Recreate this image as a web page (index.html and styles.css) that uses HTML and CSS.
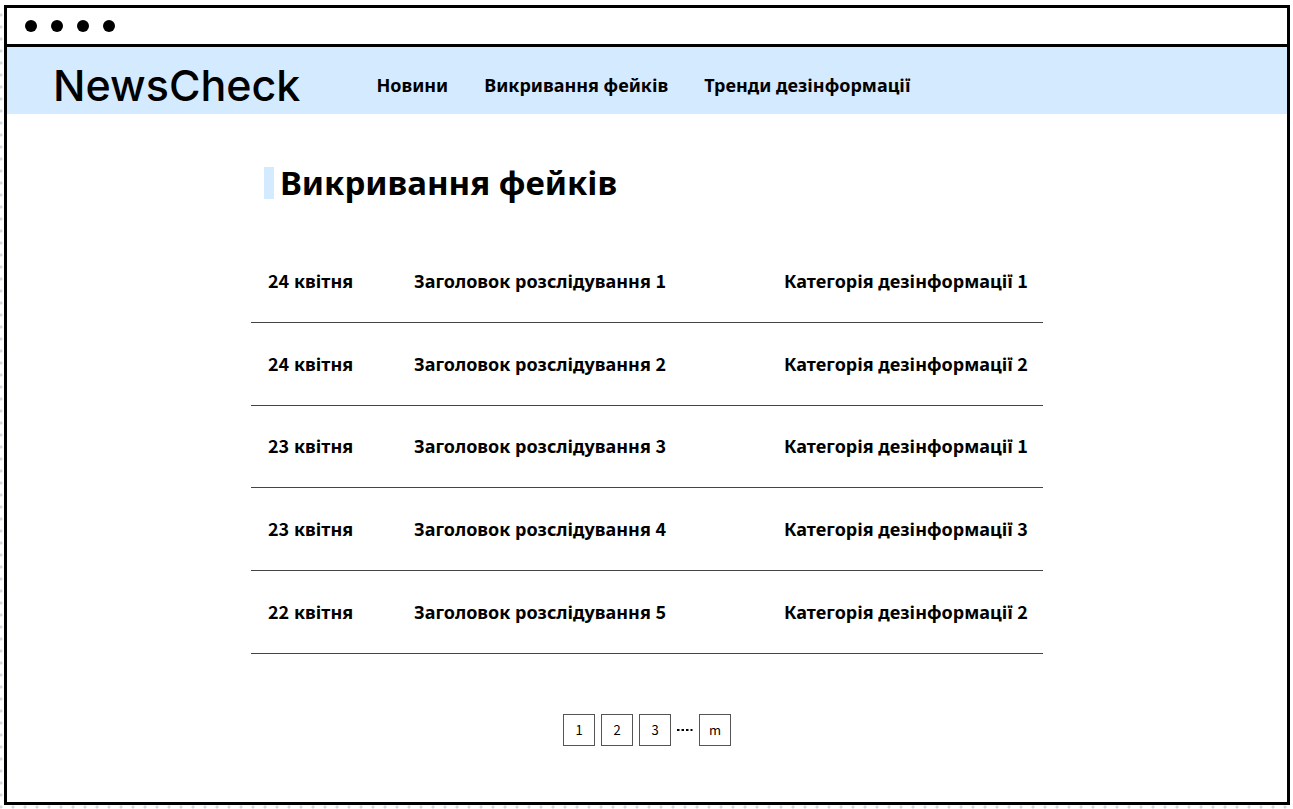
FILE: index.html
```html
<!DOCTYPE html>
<html lang="uk">
<head>
<meta charset="utf-8">
<meta name="viewport" content="width=device-width, initial-scale=1">
<title>NewsCheck</title>
<link rel="stylesheet" href="styles.css">
</head>
<body class="canvas">
<div class="window">
  <div class="titlebar" aria-hidden="true">
    <span class="dot"></span><span class="dot"></span><span class="dot"></span><span class="dot"></span>
  </div>
  <header class="header">
    <a class="logo" href="#">NewsCheck</a>
    <nav class="nav">
      <a href="#">Новини</a>
      <a href="#">Викривання фейків</a>
      <a href="#">Тренди дезінформації</a>
    </nav>
  </header>
  <main class="main">
    <h1 class="title">Викривання фейків</h1>
    <table class="list">
      <tbody>
        <tr><td class="date"><span class="num">24</span> квітня</td><td class="headline">Заголовок розслідування <span class="num">1</span></td><td class="category">Категорія дезінформації <span class="num">1</span></td></tr>
        <tr><td class="date"><span class="num">24</span> квітня</td><td class="headline">Заголовок розслідування <span class="num">2</span></td><td class="category">Категорія дезінформації <span class="num">2</span></td></tr>
        <tr><td class="date"><span class="num">23</span> квітня</td><td class="headline">Заголовок розслідування <span class="num">3</span></td><td class="category">Категорія дезінформації <span class="num">1</span></td></tr>
        <tr><td class="date"><span class="num">23</span> квітня</td><td class="headline">Заголовок розслідування <span class="num">4</span></td><td class="category">Категорія дезінформації <span class="num">3</span></td></tr>
        <tr><td class="date"><span class="num">22</span> квітня</td><td class="headline">Заголовок розслідування <span class="num">5</span></td><td class="category">Категорія дезінформації <span class="num">2</span></td></tr>
      </tbody>
    </table>
    <nav class="pager">
      <button class="page" type="button">1</button>
      <button class="page" type="button">2</button>
      <button class="page" type="button">3</button>
      <svg class="more" width="16" height="4" viewBox="0 0 16 4" aria-hidden="true"><path d="M0 1h2.5v2H0zM4.500 1H7v2H4.500zM9 1h2.500v2H9zM13.500 1H15.500v2H13.500z"/></svg>
      <button class="page" type="button">m</button>
    </nav>
  </main>
</div>
</body>
</html>
```
FILE: styles.css
```css
* { box-sizing: border-box; }

.canvas {
  margin: 0;
  min-height: 100vh;
  padding: 5px 3px 4px 4px;
  display: flex;
  background:
    linear-gradient(#fff, #fff) top / 100% 5px no-repeat,
    radial-gradient(circle at 6px 6px, #d5d7de 1px, transparent 2px) left -5px bottom -4px / 12px 12px,
    #fff;
  font-family: "Noto Sans", sans-serif;
  color: #000;
}

.window {
  flex: 1;
  display: flex;
  flex-direction: column;
  border: 3px solid #000;
  background: #fff;
}

.titlebar {
  display: flex;
  align-items: center;
  gap: 14px;
  height: 39px;
  padding: 0 18px;
  border-bottom: 3px solid #000;
}

.dot {
  width: 12px;
  height: 12px;
  border-radius: 50%;
  background: #000;
}

.header {
  display: flex;
  align-items: center;
  gap: 76px;
  padding: 0 46px;
  height: 67px;
  background: #d4eaff;
}

.header a { color: inherit; text-decoration: none; }

.logo {
  font: 500 43px/60px Inter, sans-serif;
  padding-top: 8px;
}

.nav {
  display: flex;
  gap: 36px;
  padding-top: 8px;
  font-size: 18px;
  line-height: 24px;
  font-weight: 700;
}

.main {
  width: 100%;
  max-width: 792px;
  margin: 0 auto;
  padding-top: 53px;
}

.title {
  display: flex;
  align-items: center;
  gap: 6px;
  margin: 0 0 42px 13px;
  font-size: 33px;
  line-height: 32px;
  font-weight: 700;
}

.title::before {
  content: "";
  width: 10px;
  height: 32px;
  background: #d4eaff;
}

.list {
  width: 100%;
  height: 413px;
  border-collapse: collapse;
  font-size: 18px;
  line-height: 24px;
  font-weight: 700;
}

.list td {
  padding: 0;
  border-bottom: 1px solid #444;
}

.list .date { width: 163px; padding-left: 17px; }
.list .category { width: 259px; }

.num { font-family: "Noto Sans CJK SC", sans-serif; line-height: 1; }

.pager {
  display: flex;
  justify-content: center;
  align-items: center;
  gap: 6px;
  margin-top: 60px;
}

.page {
  width: 32px;
  height: 32px;
  padding: 0;
  border: 1px solid #555;
  background: #fff;
  color: #000;
  font: 400 13px/18px "Noto Sans CJK SC", sans-serif;
}
```
